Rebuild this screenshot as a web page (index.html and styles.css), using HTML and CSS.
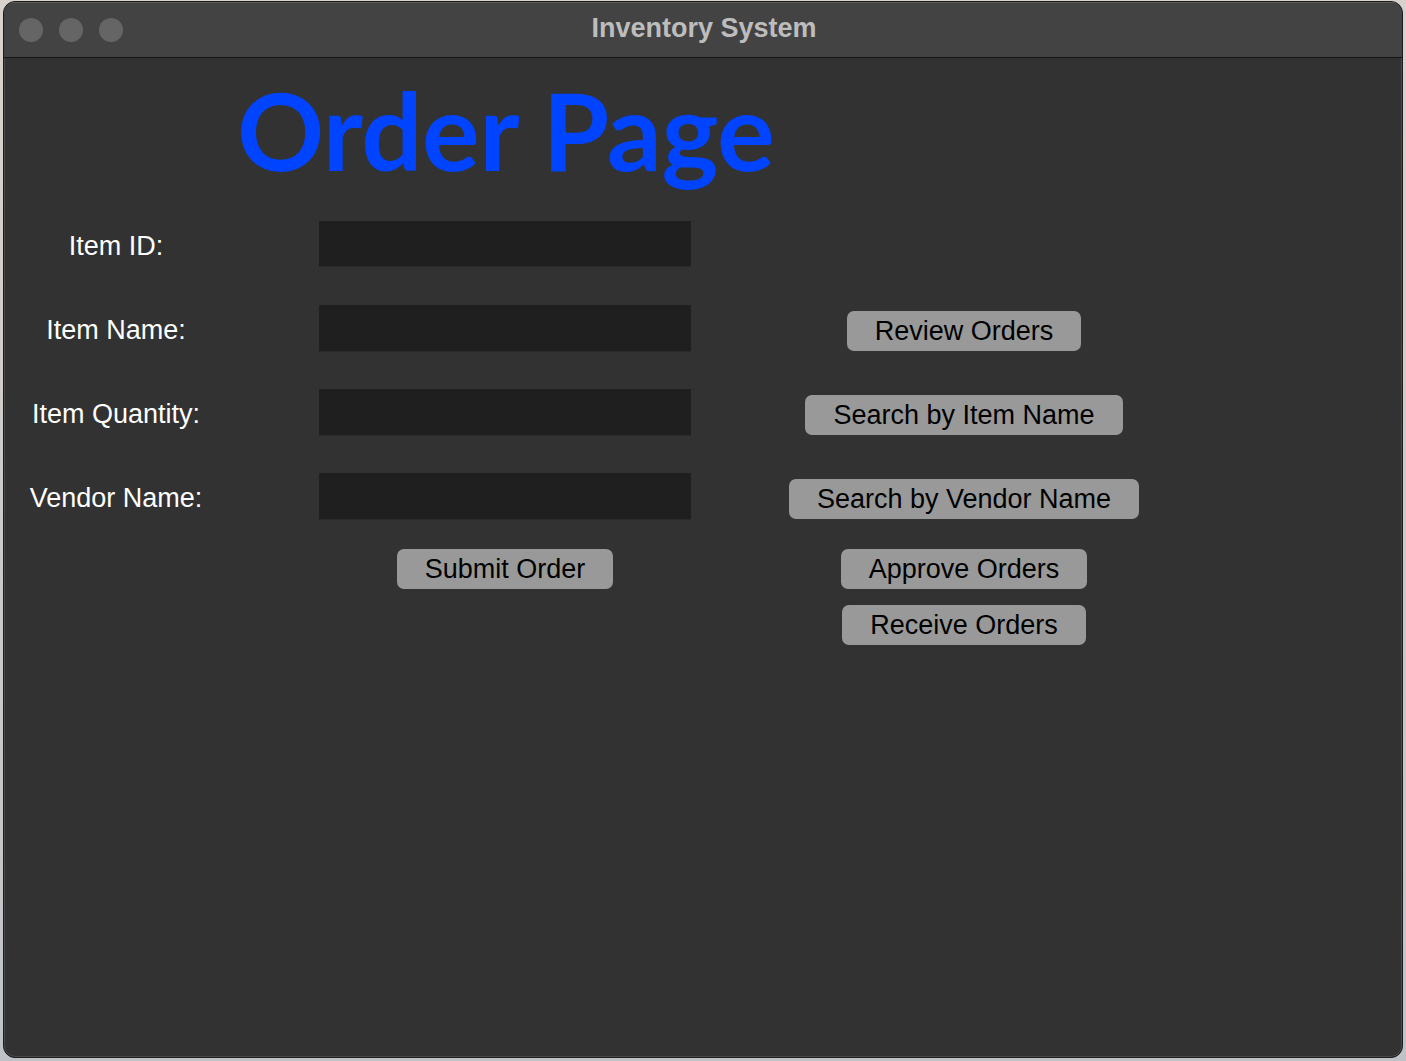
FILE: index.html
```html
<!DOCTYPE html>
<html>
<head>
<meta charset="utf-8">
<link rel="stylesheet" href="styles.css">
</head>
<body>
<div class="window">
  <div class="titlebar">
    <div class="lights">
      <span class="light"></span>
      <span class="light"></span>
      <span class="light"></span>
    </div>
    <div class="title">Inventory System</div>
  </div>
  <div class="content">
    <h1 class="heading">Order Page</h1>
    <div class="form">
      <div class="row">
        <label class="label">Item ID:</label>
        <div class="field"></div>
        <div class="side"></div>
      </div>
      <div class="row">
        <label class="label">Item Name:</label>
        <div class="field"></div>
        <div class="side"><button class="btn">Review Orders</button></div>
      </div>
      <div class="row">
        <label class="label">Item Quantity:</label>
        <div class="field"></div>
        <div class="side"><button class="btn">Search by Item Name</button></div>
      </div>
      <div class="row">
        <label class="label">Vendor Name:</label>
        <div class="field"></div>
        <div class="side"><button class="btn">Search by Vendor Name</button></div>
      </div>
      <div class="row row-btn row-submit">
        <div class="label"></div>
        <div class="center"><button class="btn">Submit Order</button></div>
        <div class="side-b"><button class="btn">Approve Orders</button></div>
      </div>
      <div class="row row-btn row-receive">
        <div class="label"></div>
        <div class="center"></div>
        <div class="side-b"><button class="btn">Receive Orders</button></div>
      </div>
    </div>
  </div>
</div>
</body>
</html>
```
FILE: styles.css
```css
html, body {
  margin: 0;
  padding: 0;
}
body {
  background: linear-gradient(180deg, #d9d2cc 0%, #bfc3c7 100%);
  width: 1406px;
  height: 1061px;
  overflow: hidden;
  font-family: "Liberation Sans", Arial, sans-serif;
}
.window {
  margin: 1px 3px 0 3px;
  width: 1400px;
  height: 1057px;
  box-sizing: border-box;
  border: 1px solid #1c1c1c;
  border-radius: 12px;
  overflow: hidden;
  background: #323232;
  display: flex;
  flex-direction: column;
  box-shadow: inset 0 0 0 1px #4a4a4a;
}
.titlebar {
  height: 56px;
  flex: none;
  background: #434343;
  border-top: 1px solid #5c5c5c;
  border-bottom: 1px solid #151515;
  box-sizing: border-box;
  position: relative;
  display: flex;
  align-items: center;
  justify-content: center;
}
.lights {
  position: absolute;
  left: 15px;
  top: 15px;
  display: flex;
  gap: 16px;
}
.light {
  width: 24px;
  height: 24px;
  border-radius: 50%;
  background: #656565;
}
.title {
  color: #bdbdbd;
  font-family: "Liberation Sans", Arial, sans-serif;
  font-weight: bold;
  font-size: 27px;
  margin-top: -3px;
  margin-left: 2px;
}
.content {
  flex: 1;
  display: flex;
  flex-direction: column;
}
.heading {
  margin: 12px 0 0 233px;
  font-family: "Lato", sans-serif;
  font-weight: 700;
  font-size: 108px;
  line-height: 118px;
  color: #0044ff;
  letter-spacing: -0.5px;
  height: 118px;
}
.form {
  display: flex;
  flex-direction: column;
  gap: 39px;
  margin-top: 33px;
}
.row {
  display: grid;
  grid-template-columns: 224px 91px 372px 546px;
  height: 45px;
}
.label {
  color: #ffffff;
  font-size: 27px;
  display: flex;
  align-items: center;
  justify-content: center;
  padding-top: 5px;
}
.field {
  grid-column: 3;
  background: #1f1f1f;
  box-shadow: 0 1px 0 #2a2a2a;
}
.side {
  grid-column: 4;
  display: flex;
  justify-content: center;
  align-items: flex-start;
  padding-top: 6px;
}
.row-btn {
  height: 40px;
}
.row-submit {
  margin-top: -8px;
}
.row-receive {
  margin-top: -23px;
}
.center {
  grid-column: 2 / span 2;
  padding-left: 91px;
  display: flex;
  justify-content: center;
}
.side-b {
  grid-column: 4;
  display: flex;
  justify-content: center;
}
.btn {
  height: 40px;
  box-sizing: border-box;
  background: #999999;
  border: none;
  border-radius: 7px;
  color: #000000;
  font-family: "Liberation Sans", Arial, sans-serif;
  font-size: 27px;
  padding: 0 28px;
  margin: 0;
}
```
